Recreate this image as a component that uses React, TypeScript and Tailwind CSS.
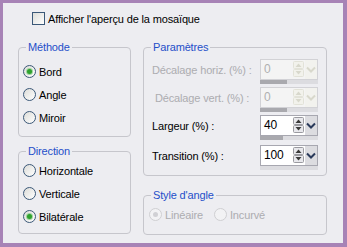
import React from "react";

const FONT = { fontFamily: '"Liberation Sans", Arial, sans-serif' };

function Radio({ checked, disabled }: { checked?: boolean; disabled?: boolean }) {
  return (
    <div
      className={
        "relative w-[13px] h-[13px] shrink-0 rounded-full border flex items-center justify-center " +
        (disabled
          ? "border-[#cfcfd2] bg-[#f2f2f4]"
          : "border-[#3b5878] bg-gradient-to-br from-[#dcdcd8] to-[#ffffff]")
      }
    >
      {checked && (
        <div
          className={
            "w-[5px] h-[5px] rounded-full " +
            (disabled ? "bg-[#d0d0d4]" : "bg-[#2ea12e] shadow-[0_0_0_1px_#9fd49f]")
          }
        />
      )}
    </div>
  );
}

function RadioRow({
  label,
  checked,
  disabled,
}: {
  label: string;
  checked?: boolean;
  disabled?: boolean;
}) {
  return (
    <div className="h-[23px] flex items-center gap-[3px] whitespace-nowrap">
      <Radio checked={checked} disabled={disabled} />
      <span className={disabled ? "text-[#acacb0]" : "text-black"}>{label}</span>
    </div>
  );
}

function Group({
  title,
  className,
  children,
}: {
  title: string;
  className: string;
  children?: React.ReactNode;
}) {
  return (
    <div className={"relative border border-[#c6c6cc] rounded-[4px] " + className}>
      <span className="absolute -top-[8px] left-[7px] px-[2px] bg-[#ededf1] text-[#1f4fc9] leading-[14px] whitespace-nowrap">
        {title}
      </span>
      {children}
    </div>
  );
}

function UpDown({ disabled }: { disabled?: boolean }) {
  const c = disabled ? "#d8d8cc" : "#3a3a3a";
  const b = disabled ? "#e2e2d8" : "#9a9aa0";
  return (
    <svg width="12" height="19" viewBox="0 0 12 19">
      <rect x="0.5" y="1.5" width="10" height="7" rx="1" fill={disabled ? "#f2f2ec" : "#e8e8ec"} stroke={b} />
      <rect x="0.5" y="9.5" width="10" height="7" rx="1" fill={disabled ? "#f2f2ec" : "#e8e8ec"} stroke={b} />
      <path d="M2.5 7 L5.5 3.5 L8.5 7 Z" fill={c} />
      <path d="M2.5 11 L5.5 14.5 L8.5 11 Z" fill={c} />
    </svg>
  );
}

function Chevron({ disabled }: { disabled?: boolean }) {
  return (
    <svg width="12" height="19" viewBox="0 0 12 19">
      <rect x="0" y="0" width="12" height="19" fill={disabled ? "#f2f2ee" : "#dcdce0"} />
      <path
        d="M2 7.5 L6 11.5 L10 7.5"
        fill="none"
        stroke={disabled ? "#d8d8cc" : "#2a3a5a"}
        strokeWidth="2"
      />
    </svg>
  );
}

function Spin({
  value,
  disabled,
  fill,
}: {
  value: string;
  disabled?: boolean;
  fill: number;
}) {
  return (
    <div className="flex flex-col w-[58px]">
      <div
        className={
          "flex items-center h-[21px] border " +
          (disabled ? "border-[#d2d2d6] bg-[#f4f4f4]" : "border-[#a7a7b0] bg-white")
        }
      >
        <div
          className={
            "w-[32px] pl-[3px] leading-[19px] text-[12px] " +
            (disabled ? "text-[#b0b0b0]" : "text-black")
          }
        >
          {value}
        </div>
        <UpDown disabled={disabled} />
        <Chevron disabled={disabled} />
      </div>
      <div className="h-[4px] w-[58px] bg-[#dcdce0]">
        <div className="h-full bg-[#a9a9ae]" style={{ width: fill }} />
      </div>
    </div>
  );
}

function ParamRow({
  label,
  value,
  disabled,
  fill,
  indent,
  mt,
}: {
  label: string;
  value: string;
  disabled?: boolean;
  fill: number;
  indent?: boolean;
  mt: string;
}) {
  return (
    <div className={"flex items-start " + mt}>
      <div
        className={
          "w-[116px] h-[21px] flex items-center whitespace-nowrap " +
          (indent ? "pl-[11px] " : "pl-[8px] ") +
          (disabled ? "text-[#acacb0]" : "text-black")
        }
      >
        {label}
      </div>
      <Spin value={value} disabled={disabled} fill={fill} />
    </div>
  );
}

export default function App() {
  return (
    <div
      className="w-[347px] h-[247px] bg-[#a783b6] pt-[3px] pl-[3px] pr-[4px] pb-[4px] text-[11px] leading-[14px] tracking-[-0.15px]"
      style={FONT}
    >
      <div className="h-full bg-[#ededf1] flex flex-col">
        <div className="mt-[9px] ml-[29px] flex items-center gap-[3px] h-[13px] whitespace-nowrap">
          <div className="w-[13px] h-[13px] border border-[#3b5878] bg-gradient-to-br from-[#dcdcd8] to-[#ffffff]" />
          <span className="text-black">Afficher l'aperçu de la mosaïque</span>
        </div>
        <div className="mt-[22px] ml-[15px] flex gap-[12px]">
          <div className="w-[113px] flex flex-col">
            <Group title="Méthode" className="h-[90px] pt-[12px] pl-[4px]">
              <RadioRow label="Bord" checked />
              <RadioRow label="Angle" />
              <RadioRow label="Miroir" />
            </Group>
            <Group title="Direction" className="mt-[14px] h-[83px] pt-[7px] pl-[4px]">
              <RadioRow label="Horizontale" />
              <RadioRow label="Verticale" />
              <RadioRow label="Bilatérale" checked />
            </Group>
          </div>
          <div className="w-[184px] flex flex-col">
            <Group title="Paramètres" className="h-[129px] pt-[11px]">
              <ParamRow label="Décalage horiz. (%) :" value="0" disabled fill={27} mt="mt-0" />
              <ParamRow label="Décalage vert. (%) :" value="0" disabled fill={27} indent mt="mt-[3px]" />
              <ParamRow label="Largeur (%) :" value="40" fill={23} mt="mt-[3px]" />
              <ParamRow label="Transition (%) :" value="100" fill={0} mt="mt-[5px]" />
            </Group>
            <Group title="Style d'angle" className="mt-[19px] h-[40px] pt-[7px] pl-[5px]">
              <div className="flex items-center">
                <RadioRow label="Linéaire" checked disabled />
                <div className="ml-[11px]">
                  <RadioRow label="Incurvé" disabled />
                </div>
              </div>
            </Group>
          </div>
        </div>
      </div>
    </div>
  );
}
